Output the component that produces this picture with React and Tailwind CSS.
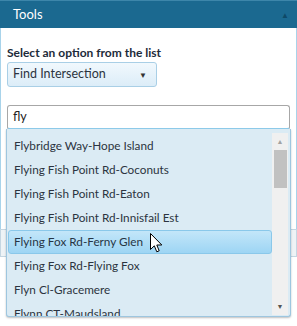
import React from "react";

const results = [
  "Flybridge Way-Hope Island",
  "Flying Fish Point Rd-Coconuts",
  "Flying Fish Point Rd-Eaton",
  "Flying Fish Point Rd-Innisfail Est",
  "Flying Fox Rd-Ferny Glen",
  "Flying Fox Rd-Flying Fox",
  "Flyn Cl-Gracemere",
  "Flynn CT-Maudsland",
];

const Cursor = () => (
  <svg width="13" height="21" viewBox="0 0 13 21" className="absolute left-[150px] top-[233px]">
    <path
      d="M0.5 0.5 L0.5 16.5 L4.3 12.8 L6.8 18.8 L9.2 17.8 L6.8 12 L11.8 12 Z"
      fill="#fff"
      stroke="#000"
      strokeWidth="1"
      strokeLinejoin="round"
    />
  </svg>
);

export default function App() {
  const hovered = 4;

  return (
    <div className="relative w-[297px] h-[326px] bg-white overflow-hidden font-['Lato']">
      {/* panel */}
      <div className="w-[297px]">
        <div className="h-[28px] bg-[#1b6990] border-t border-[#3d86aa] flex items-center justify-between pl-[13px] pr-[8px]">
          <span className="text-white text-[13px]">Tools</span>
          <span className="text-[#0e4a68] text-[8px] leading-none">▲</span>
        </div>

        <div className="border-x border-[#a8d3ea] h-[201px] px-[6px] pt-[17px]">
          <div className="text-[12px] font-bold text-[#1d2b3a] leading-[16px]">
            Select an option from the list
          </div>
          <div className="mt-[1px] w-[150px] h-[25px] rounded-[3px] border border-[#a9cfe6] bg-gradient-to-b from-[#f1f8fd] to-[#dcedf8] flex items-center justify-between pl-[5px] pr-[9px]">
            <span className="text-[12.5px] text-[#2c3440]">Find Intersection</span>
            <span className="text-[#333] text-[8px] leading-none">▼</span>
          </div>
          <div className="mt-[18px] h-[25px] rounded-[3px] border border-[#a7a7a7] border-b-[#8fcdec] border-b-2 bg-white flex items-center pl-[5px]">
            <span className="text-[12.5px] text-[#222]">fly</span>
          </div>
        </div>

        {/* part of the panel covered by the list */}
        <div className="h-[28px] border border-[#c4d6e2] bg-[#eef3f6]"></div>
      </div>

      {/* autocomplete list */}
      <div className="absolute left-[6px] top-[129px] w-[285px] h-[188px] bg-[#dbebf4] border border-[#9ec6df] border-t-0 rounded-b-[3px] shadow-[0_1px_2px_rgba(0,0,0,0.25)] flex overflow-hidden">
        <div className="flex-1 pt-[5px] pl-[1px]">
          {results.map((r, i) => (
            <div
              key={r}
              className={
                i === hovered
                  ? "h-[24px] flex items-center pl-[5px] rounded-[3px] border border-[#8ac8ea] bg-gradient-to-b from-[#c3e6f9] to-[#9dd5f4] text-[11.75px] text-[#263545] whitespace-nowrap"
                  : "h-[24px] flex items-center pl-[6px] text-[11.75px] text-[#2b3440] whitespace-nowrap"
              }
            >
              {r}
            </div>
          ))}
        </div>
        <div className="w-[16px] mt-[4px] mb-[1px] mr-[2px] bg-[#f0f0f0] flex flex-col items-center">
          <div className="h-[17px] flex items-center justify-center text-[#a3a3a3] text-[7px] leading-none">▲</div>
          <div className="w-[13px] h-[38px] bg-[#c1c1c1]"></div>
          <div className="flex-1"></div>
          <div className="h-[17px] flex items-center justify-center text-[#555] text-[7px] leading-none">▼</div>
        </div>
      </div>

      <Cursor />
    </div>
  );
}
